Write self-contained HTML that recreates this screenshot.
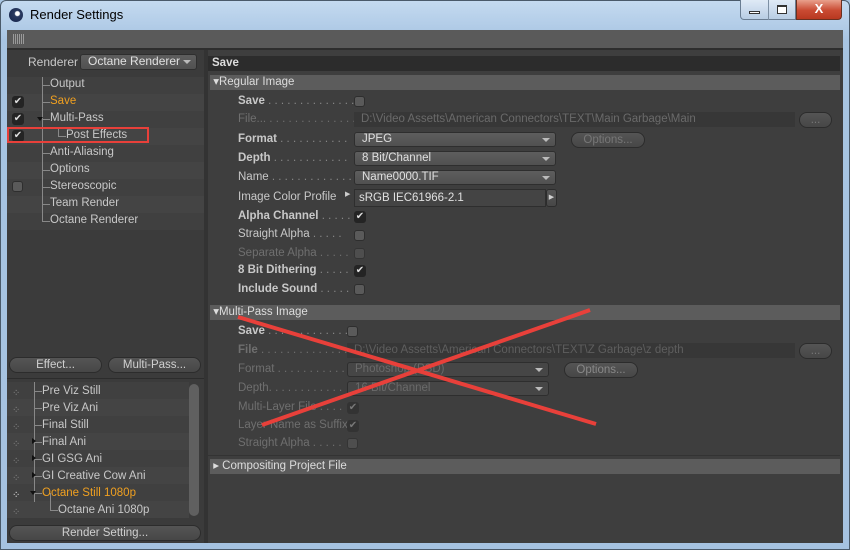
<!DOCTYPE html>
<html><head><style>
*{margin:0;padding:0;box-sizing:border-box}
body{width:850px;height:550px;overflow:hidden;background:#a9c6e3;font-family:"Liberation Sans",sans-serif;font-size:11.5px;position:relative}
.a{position:absolute}
.frame{left:0;top:0;width:850px;height:550px;background:linear-gradient(#c4daf0,#a7c4e2 40px,#a5c2e0);border:1px solid #4a5a6a;border-radius:6px 6px 0 0}
.t{color:#c8c8c8;white-space:nowrap}
.row{left:7px;width:197px;height:17px}
.cb{width:11px;height:11px;border-radius:3px;background:#5a5a5a;border:1px solid #2e2e2e}
.ck{width:12px;height:12px;border-radius:3px;background:#242424;color:#ddd;font-size:10px;line-height:12px;text-align:center}
.dd{height:15px;background:linear-gradient(#5e5e5e,#515151);border:1px solid #2e2e2e;border-radius:3px;color:#e0e0e0;padding-left:7px;line-height:13px}
.dd:after{content:"";position:absolute;right:5px;top:5px;border:4px solid transparent;border-top:4px solid #bbb}
.fld{height:15px;background:#373737;color:#6a6a6a;padding-left:7px;line-height:15px}
.btn{height:16px;border-radius:8px;background:linear-gradient(#555,#474747);border:1px solid #2c2c2c;color:#d0d0d0;text-align:center;line-height:14px}
.hd{left:210px;width:630px;height:15px;background:#5c5c5c;color:#ddd;line-height:15px}
.lb{left:238px;color:#c8c8c8}
.b{font-weight:bold}
.dim{color:#6f6f6f}
.ln{border-left:1px solid #888}
.h{position:absolute;height:1px;width:8px;background:#888}
</style></head><body>
<div class="a frame"></div>
<div class="a" style="left:9px;top:8px;width:14px;height:14px;border-radius:50%;background:radial-gradient(circle at 60% 40%,#fff 0 2px,#2a3a60 3px,#13224a)"></div>
<div class="a" style="left:30px;top:7px;font-size:13px;color:#000">Render Settings</div>
<div class="a" style="left:740px;top:0;width:56px;height:20px;border:1px solid #6a7d92;border-top:0;border-radius:0 0 0 4px;background:linear-gradient(#dfeaf6,#b8cde4)"></div>
<div class="a" style="left:768px;top:0;width:1px;height:20px;background:#7d90a4"></div>
<div class="a" style="left:749px;top:11px;width:11px;height:3px;border:1px solid #333;background:#fff"></div>
<div class="a" style="left:777px;top:5px;width:10px;height:9px;border:1px solid #333;border-top-width:2px;background:#fff"></div>
<div class="a" style="left:796px;top:0;width:46px;height:20px;border:1px solid #6a3020;border-top:0;border-radius:0 0 4px 0;background:linear-gradient(#e8a08c,#c94a32 55%,#b83820);color:#fff;font-weight:bold;font-size:13px;text-align:center;line-height:18px">X</div>
<!-- client -->
<div class="a" style="left:7px;top:30px;width:836px;height:513px;background:#3e3e3e"></div>
<div class="a" style="left:7px;top:30px;width:836px;height:18px;background:#5a5a5a"></div>
<div class="a" style="left:13px;top:34px;width:12px;height:10px;background:repeating-linear-gradient(90deg,#aaa 0 1px,transparent 1px 2px),#5a5a5a;opacity:.8"></div>
<div class="a" style="left:7px;top:48px;width:836px;height:2px;background:#2e2e2e"></div>
<!-- left -->
<div class="a" style="left:7px;top:50px;width:197px;height:493px;background:#3b3b3b"></div>
<div class="a" style="left:204px;top:50px;width:4px;height:493px;background:#333"></div>
<div class="a t" style="left:28px;top:55px;font-size:12px">Renderer</div>
<div class="a dd" style="left:80px;top:54px;width:117px;height:16px;font-size:12px">Octane Renderer</div>
<div class="a row" style="top:77px;background:#404040"></div>
<div class="a row" style="top:94px;background:#444"></div>
<div class="a row" style="top:111px;background:#404040"></div>
<div class="a row" style="top:128px;background:#444"></div>
<div class="a row" style="top:145px;background:#404040"></div>
<div class="a row" style="top:162px;background:#444"></div>
<div class="a row" style="top:179px;background:#404040"></div>
<div class="a row" style="top:196px;background:#444"></div>
<div class="a row" style="top:213px;background:#404040"></div>
<div class="a ln" style="left:42px;top:77px;height:144px"></div>
<div class="h" style="left:42px;top:85px"></div><div class="h" style="left:42px;top:102px"></div><div class="h" style="left:42px;top:119px"></div><div class="h" style="left:42px;top:153px"></div><div class="h" style="left:42px;top:170px"></div><div class="h" style="left:42px;top:187px"></div><div class="h" style="left:42px;top:204px"></div><div class="h" style="left:42px;top:221px"></div>
<div class="a ln" style="left:58px;top:128px;height:8px"></div><div class="h" style="left:58px;top:136px"></div>
<div class="a" style="left:37px;top:117px;border:3px solid transparent;border-top:4px solid #111"></div>
<div class="a t" style="left:50px;top:78px">Output</div>
<div class="a t" style="left:50px;top:95px;color:#f0a020">Save</div>
<div class="a t" style="left:50px;top:112px">Multi-Pass</div>
<div class="a t" style="left:66px;top:129px">Post Effects</div>
<div class="a t" style="left:50px;top:146px">Anti-Aliasing</div>
<div class="a t" style="left:50px;top:163px">Options</div>
<div class="a t" style="left:50px;top:180px">Stereoscopic</div>
<div class="a t" style="left:50px;top:197px">Team Render</div>
<div class="a t" style="left:50px;top:214px">Octane Renderer</div>
<div class="a ck" style="left:12px;top:96px">✔</div>
<div class="a ck" style="left:12px;top:113px">✔</div>
<div class="a ck" style="left:12px;top:130px">✔</div>
<div class="a cb" style="left:12px;top:181px"></div>
<div class="a" style="left:7px;top:127px;width:142px;height:16px;border:2px solid #e8403a"></div>
<div class="a btn" style="left:9px;top:357px;width:93px">Effect...</div>
<div class="a btn" style="left:108px;top:357px;width:93px">Multi-Pass...</div>
<div class="a" style="left:7px;top:378px;width:197px;height:1px;background:#2c2c2c"></div>
<div class="a" style="left:7px;top:382px;width:182px;height:136px;background:#3b3b3b"></div>
<div class="a row" style="top:382px;width:182px;background:#404040"></div>
<div class="a row" style="top:399px;width:182px;background:#444"></div>
<div class="a row" style="top:416px;width:182px;background:#404040"></div>
<div class="a row" style="top:433px;width:182px;background:#444"></div>
<div class="a row" style="top:450px;width:182px;background:#404040"></div>
<div class="a row" style="top:467px;width:182px;background:#444"></div>
<div class="a row" style="top:484px;width:182px;background:#404040"></div>
<div class="a row" style="top:501px;width:182px;background:#444"></div>
<div class="a ln" style="left:34px;top:382px;height:120px"></div>
<div class="h" style="left:34px;top:391px"></div><div class="h" style="left:34px;top:408px"></div><div class="h" style="left:34px;top:425px"></div><div class="h" style="left:34px;top:442px"></div><div class="h" style="left:34px;top:459px"></div><div class="h" style="left:34px;top:476px"></div><div class="h" style="left:34px;top:493px"></div>
<div class="a ln" style="left:50px;top:493px;height:17px"></div><div class="h" style="left:50px;top:510px"></div>
<div class="a t" style="left:42px;top:385px">Pre Viz Still</div>
<div class="a t" style="left:42px;top:402px">Pre Viz Ani</div>
<div class="a t" style="left:42px;top:419px">Final Still</div>
<div class="a t" style="left:42px;top:436px">Final Ani</div>
<div class="a t" style="left:42px;top:453px">GI GSG Ani</div>
<div class="a t" style="left:42px;top:470px">GI Creative Cow Ani</div>
<div class="a t" style="left:42px;top:487px;color:#f0a020">Octane Still 1080p</div>
<div class="a t" style="left:58px;top:504px">Octane Ani 1080p</div>
<div class="a" style="left:32px;top:438px;border:3px solid transparent;border-left:4px solid #111"></div>
<div class="a" style="left:32px;top:455px;border:3px solid transparent;border-left:4px solid #111"></div>
<div class="a" style="left:32px;top:472px;border:3px solid transparent;border-left:4px solid #111"></div>
<div class="a" style="left:30px;top:491px;border:3px solid transparent;border-top:4px solid #111"></div>
<div class="a t" style="left:12px;top:385px;color:#888;font-size:10px;line-height:17px">⁘<br>⁘<br>⁘<br>⁘<br>⁘<br>⁘<br><span style="color:#eee">⁘</span><br>⁘</div>
<div class="a" style="left:189px;top:384px;width:10px;height:132px;border-radius:5px;background:#606060"></div>
<div class="a btn" style="left:9px;top:525px;width:192px">Render Setting...</div>
<!-- right -->
<div class="a" style="left:208px;top:56px;width:632px;height:15px;background:#2c2c2c;color:#ddd;font-weight:bold;padding-left:4px;line-height:15px">Save</div>
<div class="a hd" style="top:75px">&nbsp;▾Regular Image</div>
<div class="a lb b" style="top:95px">Save <span style="font-weight:normal;color:#888">. . . . . . . . . . . . . .</span></div>
<div class="a lb dim" style="top:113px">File... . . . . . . . . . . . . . . .</div>
<div class="a lb b" style="top:133px">Format <span style="font-weight:normal;color:#888">. . . . . . . . . . .</span></div>
<div class="a lb b" style="top:152px">Depth <span style="font-weight:normal;color:#888">. . . . . . . . . . . .</span></div>
<div class="a lb" style="top:171px">Name <span style="color:#888">. . . . . . . . . . . . .</span></div>
<div class="a lb" style="top:191px">Image Color Profile</div>
<div class="a lb b" style="top:210px">Alpha Channel <span style="font-weight:normal;color:#888">. . . . .</span></div>
<div class="a lb" style="top:228px">Straight Alpha <span style="color:#888">. . . . .</span></div>
<div class="a lb dim" style="top:247px">Separate Alpha . . . . .</div>
<div class="a lb b" style="top:264px">8 Bit Dithering <span style="font-weight:normal;color:#888">. . . . .</span></div>
<div class="a lb b" style="top:283px">Include Sound <span style="font-weight:normal;color:#888">. . . . .</span></div>
<div class="a cb" style="left:354px;top:96px"></div>
<div class="a fld" style="left:354px;top:112px;width:441px">D:\Video Assetts\American Connectors\TEXT\Main Garbage\Main</div>
<div class="a btn" style="left:799px;top:112px;width:33px;color:#777">...</div>
<div class="a dd" style="left:354px;top:132px;width:202px">JPEG</div>
<div class="a btn" style="left:571px;top:132px;width:74px;color:#777">Options...</div>
<div class="a dd" style="left:354px;top:151px;width:202px">8 Bit/Channel</div>
<div class="a dd" style="left:354px;top:170px;width:202px">Name0000.TIF</div>
<div class="a" style="left:345px;top:190px;color:#ccc;font-size:7px">▶</div>
<div class="a" style="left:354px;top:189px;width:192px;height:18px;background:#444;border:1px solid #2e2e2e;color:#e0e0e0;padding-left:4px;line-height:16px">sRGB IEC61966-2.1</div>
<div class="a btn" style="left:546px;top:189px;width:11px;height:18px;border-radius:3px;font-size:7px;line-height:16px">▶</div>
<div class="a ck" style="left:354px;top:211px">✔</div>
<div class="a cb" style="left:354px;top:230px"></div>
<div class="a cb" style="left:354px;top:248px;opacity:.6"></div>
<div class="a ck" style="left:354px;top:265px">✔</div>
<div class="a cb" style="left:354px;top:284px"></div>
<div class="a hd" style="top:305px">&nbsp;▾Multi-Pass Image</div>
<div class="a lb b" style="top:325px">Save <span style="font-weight:normal;color:#888">. . . . . . . . . . . . .</span></div>
<div class="a lb dim b" style="top:344px">File <span style="font-weight:normal">. . . . . . . . . . . . . . .</span></div>
<div class="a lb dim" style="top:363px">Format . . . . . . . . . . .</div>
<div class="a lb dim" style="top:382px">Depth. . . . . . . . . . . .</div>
<div class="a lb dim" style="top:401px">Multi-Layer File . . . .</div>
<div class="a lb dim" style="top:419px">Layer Name as Suffix</div>
<div class="a lb dim" style="top:437px">Straight Alpha . . . . .</div>
<div class="a cb" style="left:347px;top:326px"></div>
<div class="a fld" style="left:347px;top:343px;width:448px;color:#5e5e5e">D:\Video Assetts\American Connectors\TEXT\Z Garbage\z depth</div>
<div class="a btn" style="left:799px;top:343px;width:33px;color:#777">...</div>
<div class="a dd" style="left:347px;top:362px;width:202px;color:#6a6a6a;background:#464646">Photoshop (PSD)</div>
<div class="a btn" style="left:564px;top:362px;width:74px;color:#888">Options...</div>
<div class="a dd" style="left:347px;top:381px;width:202px;color:#6a6a6a;background:#464646">16 Bit/Channel</div>
<div class="a ck" style="left:347px;top:402px;color:#777;background:#333">✔</div>
<div class="a ck" style="left:347px;top:420px;color:#777;background:#333">✔</div>
<div class="a cb" style="left:347px;top:438px;opacity:.6"></div>
<div class="a" style="left:208px;top:455px;width:632px;height:1px;background:#333"></div>
<div class="a hd" style="top:459px">&nbsp;▸ Compositing Project File</div>
<svg class="a" style="left:0;top:0" width="850" height="550"><g stroke="#e8403a" stroke-width="4" stroke-linecap="butt"><line x1="238" y1="317" x2="596" y2="424"/><line x1="590" y1="310" x2="262" y2="425"/></g></svg>
</body></html>
